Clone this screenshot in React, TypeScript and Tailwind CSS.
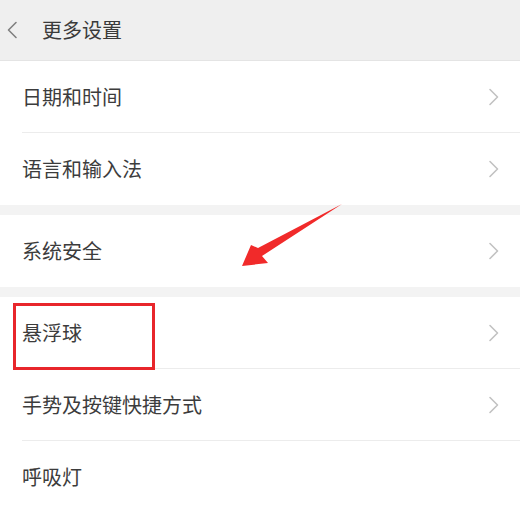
const groups = [
  ["日期和时间", "语言和输入法"],
  ["系统安全"],
  ["悬浮球", "手势及按键快捷方式", "呼吸灯"],
];

function Chevron({ dir, className }: { dir: "left" | "right"; className: string }) {
  return (
    <svg width="12" height="18" viewBox="0 0 12 18" className={className} fill="none">
      <path
        d={dir === "right" ? "M2 1.5 L9.5 9 L2 16.5" : "M10 1.5 L2.5 9 L10 16.5"}
        stroke="currentColor"
        strokeWidth="1.6"
        strokeLinecap="round"
        strokeLinejoin="round"
      />
    </svg>
  );
}

function Row({ label, last, highlight, arrow }: { label: string; last: boolean; highlight?: boolean; arrow: boolean }) {
  return (
    <div className="relative flex h-[72px] items-center pl-[22px] pr-[20px]">
      <span className="flex-1 text-[20px] leading-none text-[#3c3c3c]">{label}</span>
      {arrow && <Chevron dir="right" className="text-[#c2c2c2]" />}
      {!last && <div className="absolute bottom-0 left-[22px] right-0 h-px bg-[#ececec]" />}
      {highlight && (
        <div className="absolute left-[13px] top-[6px] h-[67px] w-[142px] border-[3px] border-[#e8262b]" />
      )}
    </div>
  );
}

export default function App() {
  return (
    <div
      className="relative h-[512px] w-[520px] overflow-hidden bg-white"
      style={{ fontFamily: '"Noto Sans CJK SC", "Noto Sans", sans-serif' }}
    >
      <div className="flex h-[61px] items-center border-b border-[#e4e4e4] bg-[#efefef]">
        <Chevron dir="left" className="ml-[6px] text-[#808080]" />
        <span className="ml-[24px] text-[20px] leading-none text-[#3a3a3a]">更多设置</span>
      </div>
      {groups.map((g, gi) => (
        <div key={gi}>
          {gi > 0 && <div className="h-[10px] bg-[#f3f3f3]" />}
          {g.map((label, i) => (
            <Row
              key={label}
              label={label}
              last={i === g.length - 1}
              highlight={label === "悬浮球"}
              arrow={label !== "呼吸灯"}
            />
          ))}
        </div>
      ))}
      <svg className="pointer-events-none absolute left-0 top-0" width="520" height="512">
        <polygon
          points="342,204 262,256 268,263 242,266 251,245 258,248"
          fill="#f12a2a"
        />
      </svg>
    </div>
  );
}
